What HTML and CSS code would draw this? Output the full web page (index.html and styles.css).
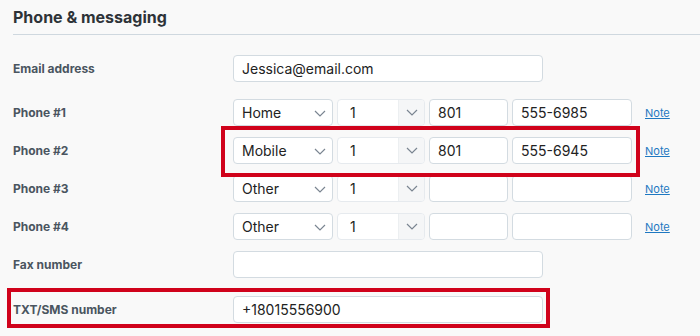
FILE: index.html
```html
<!DOCTYPE html>
<html>
<head>
<meta charset="utf-8">
<link rel="stylesheet" href="styles.css">
</head>
<body>
<div class="section">
  <h2 class="title">Phone &amp; messaging</h2>
  <div class="rows">
    <div class="row row-email">
      <div class="label">Email address</div>
      <div class="field wide">Jessica@email.com</div>
    </div>
    <div class="row row-p1">
      <div class="label">Phone #1</div>
      <div class="phone">
        <div class="field sel type">Home<svg class="chev" viewBox="0 0 12 7"><path d="M1 1l5 5 5-5"/></svg></div>
        <div class="field country"><span class="cc">1</span><span class="cbtn"><svg class="chev" viewBox="0 0 12 7"><path d="M1 1l5 5 5-5"/></svg></span></div>
        <div class="field area">801</div>
        <div class="field num">555-6985</div>
        <a class="note">Note</a>
      </div>
    </div>
    <div class="row row-p2 hl hl-phone">
      <div class="label">Phone #2</div>
      <div class="phone">
        <div class="field sel type">Mobile<svg class="chev" viewBox="0 0 12 7"><path d="M1 1l5 5 5-5"/></svg></div>
        <div class="field country"><span class="cc">1</span><span class="cbtn"><svg class="chev" viewBox="0 0 12 7"><path d="M1 1l5 5 5-5"/></svg></span></div>
        <div class="field area">801</div>
        <div class="field num">555-6945</div>
        <a class="note">Note</a>
      </div>
    </div>
    <div class="row row-p3">
      <div class="label">Phone #3</div>
      <div class="phone">
        <div class="field sel type">Other<svg class="chev" viewBox="0 0 12 7"><path d="M1 1l5 5 5-5"/></svg></div>
        <div class="field country"><span class="cc">1</span><span class="cbtn"><svg class="chev" viewBox="0 0 12 7"><path d="M1 1l5 5 5-5"/></svg></span></div>
        <div class="field area"></div>
        <div class="field num"></div>
        <a class="note">Note</a>
      </div>
    </div>
    <div class="row row-p4">
      <div class="label">Phone #4</div>
      <div class="phone">
        <div class="field sel type">Other<svg class="chev" viewBox="0 0 12 7"><path d="M1 1l5 5 5-5"/></svg></div>
        <div class="field country"><span class="cc">1</span><span class="cbtn"><svg class="chev" viewBox="0 0 12 7"><path d="M1 1l5 5 5-5"/></svg></span></div>
        <div class="field area"></div>
        <div class="field num"></div>
        <a class="note">Note</a>
      </div>
    </div>
    <div class="row row-fax">
      <div class="label">Fax number</div>
      <div class="field wide"></div>
    </div>
    <div class="row row-txt hl hl-txt">
      <div class="label">TXT/SMS number</div>
      <div class="field wide">+18015556900</div>
    </div>
  </div>
</div>
</body>
</html>
```

FILE: styles.css
```css
*, *::before, *::after { box-sizing: border-box; }
html, body { margin: 0; padding: 0; }
body {
  background: #f9f9f9;
  font-family: Inter, "Noto Sans", sans-serif;
  color: #2b2f33;
  width: 700px;
  height: 336px;
  overflow: hidden;
}
.section { padding-left: 13px; }
.title {
  margin: 0;
  padding: 7px 0 7px 0;
  font-size: 16px;
  line-height: 20px;
  font-weight: 700;
  color: #2e3338;
  border-bottom: 1px solid #cfd8df;
}
.rows {
  display: flex;
  flex-direction: column;
  padding-top: 20px;
}
.row {
  display: flex;
  align-items: center;
  height: 27px;
  margin-bottom: 11px;
  position: relative;
}
.row-email { margin-bottom: 17px; }
.row-fax { margin-bottom: 18px; }
.label {
  width: 220px;
  flex: none;
  font-size: 12px;
  font-weight: 700;
  color: #4a5560;
}
.field {
  height: 27px;
  background: #fff;
  border: 1px solid #d3dbe1;
  border-radius: 4px;
  font-size: 14px;
  line-height: 25px;
  padding-left: 8px;
  color: #222;
  flex: none;
  display: flex;
  align-items: center;
}
.wide { width: 310px; }
.phone { display: flex; align-items: center; gap: 4px; }
.type { width: 100px; position: relative; }
.chev {
  width: 12px;
  height: 7px;
  fill: none;
  stroke: #7a8591;
  stroke-width: 1.2;
}
.type .chev { position: absolute; right: 6px; top: 10px; }
.country {
  width: 88px;
  padding-left: 0;
  border-color: #e6eaee;
  overflow: hidden;
}
.cc { flex: 1; padding-left: 12px; }
.cbtn {
  width: 26px;
  height: 100%;
  background: #f5f6f7;
  border-left: 1px solid #eceff1;
  display: flex;
  align-items: center;
  justify-content: center;
}
.area { width: 79px; }
.num { width: 120px; }
.note {
  margin-left: 9px;
  font-size: 11px;
  color: #1f78c1;
  text-decoration: underline;
  cursor: pointer;
}
.hl::after {
  content: "";
  position: absolute;
  border: 4px solid #d0021b;
  pointer-events: none;
  z-index: 2;
}
.hl-phone::after {
  left: 208px;
  top: -11px;
  width: 419px;
  height: 51px;
}
.hl-txt::after {
  left: -6px;
  top: -8px;
  width: 543px;
  height: 40px;
}
```
